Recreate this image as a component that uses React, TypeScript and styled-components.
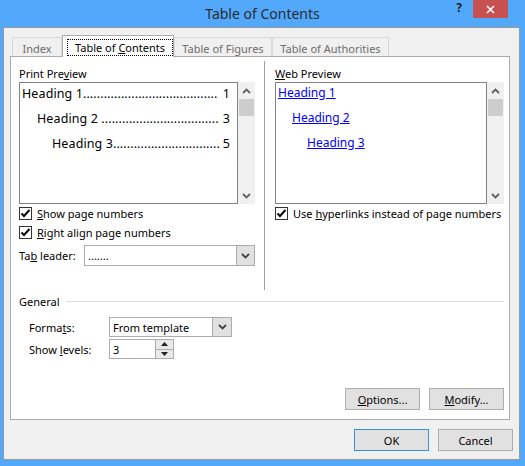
import React from 'react';
import styled, { createGlobalStyle } from 'styled-components';

const GlobalStyle = createGlobalStyle`
  html, body {
    margin: 0;
    padding: 0;
  }
  body {
    font-family: "Noto Sans", "Open Sans", sans-serif;
    font-size: 11px;
    color: #000;
  }
`;

const Frame = styled.div`
  width: 525px;
  height: 466px;
  box-sizing: border-box;
  background: #52a9fb;
  padding: 0 5px 6px 3px;
  display: flex;
  flex-direction: column;
`;

const TitleBar = styled.div`
  height: 27px;
  flex: none;
  margin: 0 -5px 0 -3px;
  display: grid;
  grid-template-columns: 1fr auto 1fr;
`;

const Title = styled.div`
  grid-column: 2;
  font-size: 14px;
  line-height: 27px;
  color: #2b2b2b;
`;

const Controls = styled.div`
  grid-column: 3;
  justify-self: end;
  display: flex;
  align-items: flex-start;
  margin-right: 17px;
`;

const Help = styled.div`
  font-size: 12px;
  font-weight: bold;
  line-height: 16px;
  color: #222;
  margin-right: 11px;
`;

const CloseButton = styled.div`
  width: 35px;
  height: 18px;
  background: #c75050;
  display: flex;
  align-items: center;
  justify-content: center;
`;

const Client = styled.div`
  flex: 1;
  background: #f0f0f0;
  border: 1px solid #9a9a9a;
  display: flex;
  flex-direction: column;
  padding-top: 7px;
`;

const TabStrip = styled.div`
  display: flex;
  align-items: flex-end;
  height: 22px;
  margin: 0 0 -1px 8px;
`;

const Tab = styled.div<{ $active?: boolean; $w: number }>`
  box-sizing: border-box;
  width: ${(p) => p.$w}px;
  height: ${(p) => (p.$active ? 22 : 19)}px;
  margin-bottom: ${(p) => (p.$active ? 0 : 1)}px;
  border: 1px solid ${(p) => (p.$active ? '#acacac' : '#d9d9d9')};
  border-bottom: none;
  background: ${(p) => (p.$active ? '#fff' : '#f0f0f0')};
  color: ${(p) => (p.$active ? '#000' : '#6d6d6d')};
  position: ${(p) => (p.$active ? 'relative' : 'static')};
  display: flex;
  align-items: ${(p) => (p.$active ? 'flex-start' : 'center')};
  justify-content: ${(p) => (p.$active ? 'flex-start' : 'center')};
  padding: ${(p) => (p.$active ? '3px 0 0 4px' : '2px 0 0 0')};
`;

const FocusRing = styled.div`
  box-sizing: border-box;
  width: 106px;
  height: 17px;
  border: 1px dotted #000;
  display: flex;
  align-items: center;
  justify-content: center;
`;

const Panel = styled.div`
  box-sizing: border-box;
  width: 500px;
  height: 364px;
  margin-left: 6px;
  background: #fff;
  border: 1px solid #acacac;
  display: flex;
  flex-direction: column;
`;

const TopSection = styled.div`
  box-sizing: border-box;
  height: 233px;
  padding: 4px 0 0 8px;
  display: flex;
`;

const Column = styled.div<{ $w: number }>`
  width: ${(p) => p.$w}px;
  display: flex;
  flex-direction: column;
`;

const Separator = styled.div`
  width: 1px;
  background: #a0a0a0;
  margin: 0 10px 0 9px;
`;

const SectionLabel = styled.div`
  line-height: 17px;
  padding-top: 4px;
`;

const PreviewRow = styled.div`
  height: 122px;
  display: flex;
`;

const PreviewBox = styled.div<{ $padRight: number }>`
  flex: 1;
  min-width: 0;
  box-sizing: border-box;
  border: 1px solid #828282;
  overflow: hidden;
  padding: 0 ${(p) => p.$padRight}px 0 2px;
`;

const ScrollBar = styled.div`
  width: 17px;
  background: #f0f0f0;
  display: flex;
  flex-direction: column;
  align-items: center;
`;

const ScrollArrow = styled.div`
  height: 17px;
  width: 17px;
  display: flex;
  align-items: center;
  justify-content: center;
`;

const Thumb = styled.div`
  width: 15px;
  height: 17px;
  background: #cdcdcd;
`;

const Spacer = styled.div`
  flex: 1;
`;

const TocLine = styled.div<{ $indent: number }>`
  display: flex;
  align-items: baseline;
  line-height: 21px;
  margin-bottom: 4px;
  padding-left: ${(p) => p.$indent}px;
  font-size: 12.5px;
  white-space: pre;
`;

const TocText = styled.span`
  letter-spacing: 0.1px;
`;

const PageNum = styled.span`
  margin-left: auto;
`;

const WebLines = styled.div`
  margin-top: -1px;
`;

const WebLine = styled.div<{ $indent: number }>`
  line-height: 21px;
  margin-bottom: 4px;
  padding-left: ${(p) => p.$indent}px;
  font-size: 12px;
  white-space: nowrap;
`;

const Link = styled.span`
  color: #0000ff;
  text-decoration: underline;
`;

const CheckRow = styled.div`
  display: flex;
  align-items: center;
  height: 19px;
  gap: 5px;
  white-space: nowrap;
`;

const CheckBox = styled.div`
  box-sizing: border-box;
  width: 13px;
  height: 13px;
  border: 1px solid #333;
  background: #fff;
  display: flex;
  align-items: center;
  justify-content: center;
`;

const U = styled.span`
  text-decoration: underline;
`;

const LeaderRow = styled.div`
  display: flex;
  align-items: center;
  margin-top: 3px;
`;

const LeaderLabel = styled.div`
  width: 65px;
`;

const Select = styled.div<{ $w: number; $h: number }>`
  box-sizing: border-box;
  width: ${(p) => p.$w}px;
  height: ${(p) => p.$h}px;
  border: 1px solid #acacac;
  background: #fff;
  display: flex;
`;

const SelectValue = styled.div`
  flex: 1;
  padding-left: 3px;
  display: flex;
  align-items: center;
`;

const SelectArrow = styled.div<{ $w: number }>`
  width: ${(p) => p.$w}px;
  background: #e1e1e1;
  border-left: 1px solid #acacac;
  display: flex;
  align-items: center;
  justify-content: center;
`;

const SpinButtons = styled.div`
  width: 17px;
  display: flex;
  flex-direction: column;
  border-left: 1px solid #acacac;
`;

const SpinHalf = styled.div<{ $top?: boolean }>`
  flex: 1;
  background: #e9e9e9;
  border-bottom: ${(p) => (p.$top ? '1px solid #acacac' : 'none')};
  display: flex;
  align-items: center;
  justify-content: center;
`;

const GroupHeader = styled.div`
  display: flex;
  align-items: center;
  line-height: 15px;
  margin-top: 4px;
  padding: 0 5px 0 8px;
`;

const GroupLine = styled.div`
  flex: 1;
  height: 1px;
  background: #dcdcdc;
  margin-left: 6px;
`;

const FormRow = styled.div<{ $top: number }>`
  display: grid;
  grid-template-columns: 80px auto;
  align-items: center;
  justify-content: start;
  padding-left: 18px;
  margin-top: ${(p) => p.$top}px;
`;

const ButtonRow = styled.div<{ $pad: string }>`
  display: flex;
  justify-content: flex-end;
  gap: 9px;
  padding: ${(p) => p.$pad};
`;

const Button = styled.div<{ $default?: boolean }>`
  box-sizing: border-box;
  width: 75px;
  height: 22px;
  border: 1px solid ${(p) => (p.$default ? '#3c8fe0' : '#adadad')};
  background: #e1e1e1;
  display: flex;
  align-items: center;
  justify-content: center;
`;

const Chevron = ({ up, color = '#606060' }: { up?: boolean; color?: string }) => (
  <svg width="9" height="6" viewBox="0 0 9 6">
    <path
      d={up ? 'M1 5 L4.5 1.5 L8 5' : 'M1 1 L4.5 4.5 L8 1'}
      fill="none"
      stroke={color}
      strokeWidth="1.8"
    />
  </svg>
);

const Triangle = ({ up }: { up?: boolean }) => (
  <svg width="7" height="4" viewBox="0 0 7 4">
    <path d={up ? 'M0 4 L3.5 0 L7 4 Z' : 'M0 0 L3.5 4 L7 0 Z'} fill="#222" />
  </svg>
);

const Tick = () => (
  <svg width="11" height="11" viewBox="0 0 11 11">
    <path d="M1.5 5.5 L4 8 L9.5 2" fill="none" stroke="#000" strokeWidth="2" />
  </svg>
);

const Scroll = () => (
  <ScrollBar>
    <ScrollArrow>
      <Chevron up />
    </ScrollArrow>
    <Thumb />
    <Spacer />
    <ScrollArrow>
      <Chevron />
    </ScrollArrow>
  </ScrollBar>
);

const Check = ({ children }: { children: React.ReactNode }) => (
  <CheckRow>
    <CheckBox>
      <Tick />
    </CheckBox>
    <span>{children}</span>
  </CheckRow>
);

const tocEntries = [
  { text: 'Heading 1', dots: 39, page: '1', indent: 0 },
  { text: 'Heading 2 ', dots: 34, page: '3', indent: 15 },
  { text: 'Heading 3', dots: 31, page: '5', indent: 30 },
];

const App: React.FC = () => {
  return (
    <>
      <GlobalStyle />
      <Frame>
        <TitleBar>
          <Title>Table of Contents</Title>
          <Controls>
            <Help>?</Help>
            <CloseButton>
              <svg width="9" height="9" viewBox="0 0 9 9">
                <path d="M1 1 L8 8 M8 1 L1 8" stroke="#fff" strokeWidth="1.6" />
              </svg>
            </CloseButton>
          </Controls>
        </TitleBar>
        <Client>
          <TabStrip>
            <Tab $w={50}>Index</Tab>
            <Tab $w={112} $active>
              <FocusRing>
                <span>
                  Table of <U>C</U>ontents
                </span>
              </FocusRing>
            </Tab>
            <Tab $w={98}>Table of Figures</Tab>
            <Tab $w={117}>Table of Authorities</Tab>
          </TabStrip>
          <Panel>
            <TopSection>
              <Column $w={236}>
                <SectionLabel>
                  Print Pre<U>v</U>iew
                </SectionLabel>
                <PreviewRow>
                  <PreviewBox $padRight={7}>
                    {tocEntries.map((e) => (
                      <TocLine key={e.text} $indent={e.indent}>
                        <TocText>{e.text + '.'.repeat(e.dots)}</TocText>
                        <PageNum>{e.page}</PageNum>
                      </TocLine>
                    ))}
                  </PreviewBox>
                  <Scroll />
                </PreviewRow>
                <Check>
                  <U>S</U>how page numbers
                </Check>
                <Check>
                  <U>R</U>ight align page numbers
                </Check>
                <LeaderRow>
                  <LeaderLabel>
                    Ta<U>b</U> leader:
                  </LeaderLabel>
                  <Select $w={171} $h={21}>
                    <SelectValue>.......</SelectValue>
                    <SelectArrow $w={17}>
                      <Chevron color="#444" />
                    </SelectArrow>
                  </Select>
                </LeaderRow>
              </Column>
              <Separator />
              <Column $w={229}>
                <SectionLabel>
                  <U>W</U>eb Preview
                </SectionLabel>
                <PreviewRow>
                  <PreviewBox $padRight={0}>
                    <WebLines>
                      <WebLine $indent={0}>
                        <Link>Heading 1</Link>
                      </WebLine>
                      <WebLine $indent={14}>
                        <Link>Heading 2</Link>
                      </WebLine>
                      <WebLine $indent={29}>
                        <Link>Heading 3</Link>
                      </WebLine>
                    </WebLines>
                  </PreviewBox>
                  <Scroll />
                </PreviewRow>
                <Check>
                  Use <U>h</U>yperlinks instead of page numbers
                </Check>
              </Column>
            </TopSection>
            <GroupHeader>
              <span>General</span>
              <GroupLine />
            </GroupHeader>
            <FormRow $top={8}>
              <span>
                Forma<U>t</U>s:
              </span>
              <Select $w={123} $h={20}>
                <SelectValue>From template</SelectValue>
                <SelectArrow $w={18}>
                  <Chevron color="#444" />
                </SelectArrow>
              </Select>
            </FormRow>
            <FormRow $top={2}>
              <span>
                Show <U>l</U>evels:
              </span>
              <Select $w={65} $h={20}>
                <SelectValue>3</SelectValue>
                <SpinButtons>
                  <SpinHalf $top>
                    <Triangle up />
                  </SpinHalf>
                  <SpinHalf>
                    <Triangle />
                  </SpinHalf>
                </SpinButtons>
              </Select>
            </FormRow>
            <Spacer />
            <ButtonRow $pad="0 5px 9px 0">
              <Button>
                <span>
                  <U>O</U>ptions...
                </span>
              </Button>
              <Button>
                <span>
                  <U>M</U>odify...
                </span>
              </Button>
            </ButtonRow>
          </Panel>
          <ButtonRow $pad="9px 6px 0 0">
            <Button $default>OK</Button>
            <Button>Cancel</Button>
          </ButtonRow>
        </Client>
      </Frame>
    </>
  );
};

export default App;
